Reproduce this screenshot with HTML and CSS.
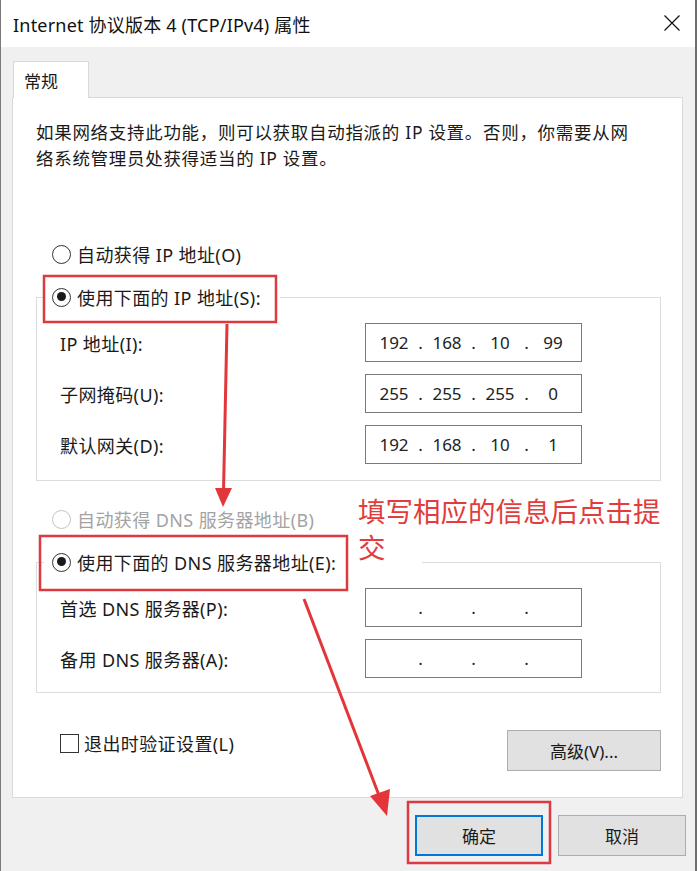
FILE: index.html
```html
<!DOCTYPE html>
<html lang="zh-CN">
<head>
<meta charset="utf-8">
<title>Internet 协议版本 4 (TCP/IPv4) 属性</title>
<link rel="stylesheet" href="styles.css">
</head>
<body>
<div class="window">
  <div class="titlebar">
    <span class="title">Internet 协议版本 4 (TCP/IPv4) 属性</span>
    <svg class="close" width="16" height="16" viewBox="0 0 16 16"><path d="M0.5 0.5 L15.5 15.5 M15.5 0.5 L0.5 15.5" stroke="#111" stroke-width="1.2" fill="none"/></svg>
  </div>
  <div class="body">
    <div class="tabs"><div class="tab">常规</div></div>
    <div class="panel">
      <p class="desc">如果网络支持此功能，则可以获取自动指派的 IP 设置。否则，你需要从网络系统管理员处获得适当的 IP 设置。</p>

      <div class="radio-row auto-ip"><span class="radio"></span><span>自动获得 IP 地址(O)</span></div>

      <div class="group">
        <div class="group-head"><span class="radio checked"></span><span>使用下面的 IP 地址(S):</span></div>
        <div class="field-row first"><span class="label">IP 地址(I):</span><div class="ipbox"><span class="seg">192</span><span class="dot">.</span><span class="seg">168</span><span class="dot">.</span><span class="seg">10</span><span class="dot">.</span><span class="seg">99</span></div></div>
        <div class="field-row"><span class="label">子网掩码(U):</span><div class="ipbox"><span class="seg">255</span><span class="dot">.</span><span class="seg">255</span><span class="dot">.</span><span class="seg">255</span><span class="dot">.</span><span class="seg">0</span></div></div>
        <div class="field-row"><span class="label">默认网关(D):</span><div class="ipbox"><span class="seg">192</span><span class="dot">.</span><span class="seg">168</span><span class="dot">.</span><span class="seg">10</span><span class="dot">.</span><span class="seg">1</span></div></div>
      </div>

      <div class="radio-row auto-dns disabled"><span class="radio"></span><span>自动获得 DNS 服务器地址(B)</span></div>

      <div class="group group-dns">
        <div class="group-head"><span class="radio checked"></span><span>使用下面的 DNS 服务器地址(E):</span></div>
        <div class="field-row first"><span class="label">首选 DNS 服务器(P):</span><div class="ipbox"><span class="seg"></span><span class="dot">.</span><span class="seg"></span><span class="dot">.</span><span class="seg"></span><span class="dot">.</span><span class="seg"></span></div></div>
        <div class="field-row"><span class="label">备用 DNS 服务器(A):</span><div class="ipbox"><span class="seg"></span><span class="dot">.</span><span class="seg"></span><span class="dot">.</span><span class="seg"></span><span class="dot">.</span><span class="seg"></span></div></div>
      </div>

      <div class="bottom-row">
        <label class="check"><span class="checkbox"></span><span>退出时验证设置(L)</span></label>
        <button class="btn advanced">高级(V)...</button>
      </div>
    </div>
    <div class="footer">
      <button class="btn ok">确定</button>
      <button class="btn">取消</button>
    </div>
  </div>

  <svg class="annot" width="697" height="871" viewBox="0 0 697 871">
    <g fill="none" stroke="#dc3a3f" stroke-width="2.5">
      <rect x="44" y="276" width="232" height="46"/>
      <rect x="40" y="536" width="307" height="54"/>
      <rect x="408" y="802" width="142" height="61"/>
    </g>
    <g stroke="#e4363a" stroke-width="3" fill="#e4363a">
      <line x1="227" y1="324" x2="223.5" y2="492"/>
      <polygon points="215,488 232,488 223,507" stroke="none"/>
      <line x1="304" y1="599" x2="380" y2="798"/>
      <polygon points="370,796 390,789 387,816" stroke="none"/>
    </g>
  </svg>
  <div class="note">填写相应的信息后点击提交</div>
</div>
</body>
</html>
```
FILE: styles.css
```css
* { box-sizing: border-box; }
html, body { margin: 0; padding: 0; background: #f0f0f0; }
body {
  font-family: "Noto Sans", "Noto Sans CJK SC", sans-serif;
  font-size: 18px;
  letter-spacing: 0.4px;
  color: #1a1a1a;
}
.window {
  position: relative;
  width: 697px;
  height: 871px;
  background: #f0f0f0;
  border-left: 1px solid #7a7a7a;
  overflow: hidden;
}
.window::after {
  content: "";
  position: absolute;
  top: 0; bottom: 0; left: 694px;
  width: 2px;
  background: #6e6e6e;
}
.titlebar {
  height: 47px;
  background: #fff;
  display: flex;
  align-items: center;
  justify-content: space-between;
  padding: 0 17px 0 12px;
}
.title { font-size: 18px; color: #111; letter-spacing: 0.2px; }
.close { display: block; margin-top: -1px; }

.body { padding: 14px 0 0 11px; }
.tabs { display: flex; height: 36px; }
.tab {
  width: 76px;
  margin-left: 1px;
  height: 37px;
  background: #fff;
  border: 1px solid #d9d9d9;
  border-bottom: none;
  padding: 6px 0 0 10px;
  font-size: 17px;
  letter-spacing: 0;
  position: relative;
  z-index: 1;
}
.panel {
  width: 671px;
  height: 701px;
  background: #fff;
  border: 1px solid #d9d9d9;
  padding: 21px 21px 0 23px;
}
.desc {
  margin: 0;
  font-size: 17.5px;
  line-height: 26px;
  width: 596px;
  letter-spacing: 0.7px;
}

.radio-row, .group-head { display: flex; align-items: center; gap: 6px; height: 24px; }
.radio {
  width: 19px; height: 19px;
  border: 1.5px solid #333;
  border-radius: 50%;
  background: #fff;
  flex: none;
  position: relative;
}
.radio.checked::after {
  content: "";
  position: absolute;
  left: 3.5px; top: 3.5px;
  width: 9px; height: 9px;
  border-radius: 50%;
  background: #1a1a1a;
}
.auto-ip { margin: 71px 0 0 16px; }
.disabled { color: #a3a3a3; }
.disabled .radio { border-color: #c4c4c4; }

.group {
  margin: 31px 0 0 0;
  width: 625px;
  border: 1px solid #dcdcdc;
  height: 184px;
  padding: 0 0 0 23px;
}
.group-head {
  margin: -13px 0 0 -16px;
  background: #fff;
  width: 236px;
  padding-left: 8px;
}
.field-row {
  display: flex;
  align-items: center;
  justify-content: space-between;
  height: 39px;
  margin-top: 12px;
  padding-right: 78px;
}
.field-row.first { margin-top: 14px; }
.ipbox {
  width: 217px;
  height: 39px;
  border: 1.5px solid #7a7a7a;
  display: flex;
  align-items: center;
  padding-left: 8px;
  font-size: 17px;
  letter-spacing: 0;
  color: #222;
}
.seg { width: 40px; text-align: center; }
.dot { width: 13px; text-align: center; }

.auto-dns { margin: 26px 0 0 16px; }
.group-dns { margin-top: 31px; height: 131px; }
.group-dns .group-head { width: 378px; }

.bottom-row {
  display: flex;
  align-items: flex-start;
  justify-content: space-between;
  margin-top: 37px;
  width: 625px;
  padding-left: 24px;
}
.check { display: flex; align-items: center; gap: 5px; height: 24px; margin-top: 1px; }
.checkbox {
  width: 19px; height: 19px;
  border: 1.5px solid #333;
  background: #fff;
}
.btn {
  font-family: inherit;
  font-size: 17px;
  letter-spacing: 0;
  color: #1a1a1a;
  background: #e1e1e1;
  border: 1.5px solid #adadad;
  padding: 0;
  height: 41px;
}
.advanced { width: 154px; }
.footer {
  display: flex;
  justify-content: flex-end;
  gap: 15px;
  padding: 17px 0 0 0;
  width: 674px;
}
.footer .btn { width: 128px; height: 41px; }
.btn.ok { border: 2px solid #0078d7; }

.annot { position: absolute; left: -1px; top: 0; pointer-events: none; }
.note {
  position: absolute;
  left: 357px;
  top: 492px;
  width: 320px;
  font-family: "Noto Sans CJK SC", sans-serif;
  font-size: 27.5px;
  letter-spacing: 0;
  line-height: 36px;
  color: #e23c3c;
}
```
